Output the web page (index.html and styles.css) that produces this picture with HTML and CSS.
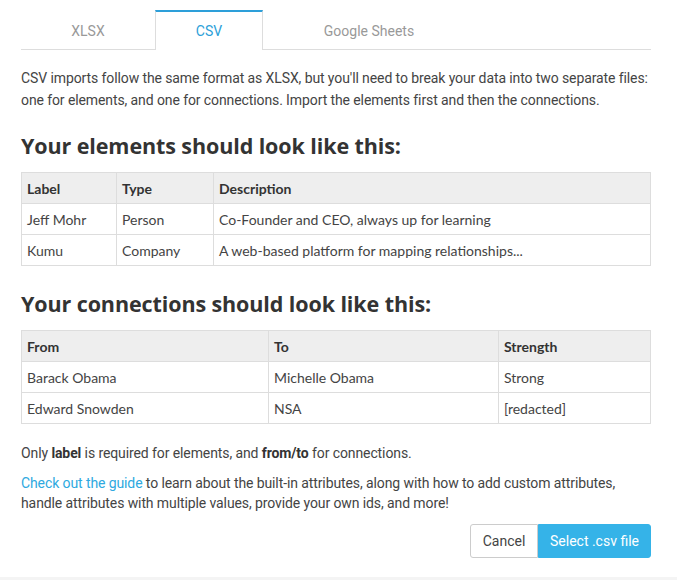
FILE: index.html
```html
<!DOCTYPE html>
<html>
<head>
<meta charset="utf-8">
<link rel="stylesheet" href="styles.css">
</head>
<body>
<div class="modal">
  <div class="tabs">
    <div class="tab tab-xlsx">XLSX</div>
    <div class="tab tab-csv active">CSV</div>
    <div class="tab tab-gs">Google Sheets</div>
  </div>
  <p class="intro">CSV imports follow the same format as XLSX, but you'll need to break your data into two separate files: one for elements, and one for connections. Import the elements first and then the connections.</p>
  <h2>Your elements should look like this:</h2>
  <table class="tbl tbl-el">
    <thead><tr><th class="c1">Label</th><th class="c2">Type</th><th>Description</th></tr></thead>
    <tbody>
      <tr><td>Jeff Mohr</td><td>Person</td><td>Co-Founder and CEO, always up for learning</td></tr>
      <tr><td>Kumu</td><td>Company</td><td>A web-based platform for mapping relationships...</td></tr>
    </tbody>
  </table>
  <h2>Your connections should look like this:</h2>
  <table class="tbl tbl-con">
    <thead><tr><th class="k1">From</th><th class="k2">To</th><th>Strength</th></tr></thead>
    <tbody>
      <tr><td>Barack Obama</td><td>Michelle Obama</td><td>Strong</td></tr>
      <tr><td>Edward Snowden</td><td>NSA</td><td>[redacted]</td></tr>
    </tbody>
  </table>
  <p class="note">Only <b>label</b> is required for elements, and <b>from/to</b> for connections.</p>
  <p class="guide"><a href="#">Check out the guide</a> to learn about the built-in attributes, along with how to add custom attributes, handle attributes with multiple values, provide your own ids, and more!</p>
  <div class="actions">
    <button class="btn btn-cancel">Cancel</button>
    <button class="btn btn-primary">Select .csv file</button>
  </div>
</div>
<div class="footer-line"></div>
</body>
</html>
```
FILE: styles.css
```css
html, body {
  margin: 0;
  padding: 0;
  background: #fff;
}
body {
  font-family: Roboto, "Liberation Sans", sans-serif;
  color: #444;
  width: 677px;
  height: 580px;
  overflow: hidden;
}
.modal {
  padding: 10px 26px 0 21px;
}
.tabs {
  display: flex;
  border-bottom: 1px solid #ddd;
  height: 39px;
}
.tab {
  box-sizing: border-box;
  display: flex;
  align-items: center;
  justify-content: center;
  font-size: 14px;
  color: #999;
  padding-top: 2px;
}
.tab-xlsx { width: 134px; }
.tab-csv { width: 108px; }
.tab-gs { width: 212px; }
.tab.active {
  color: #2d9fd9;
  background: #fff;
  border-top: 2px solid #2d9fd9;
  border-left: 1px solid #ddd;
  border-right: 1px solid #ddd;
  height: 40px;
  padding-top: 0;
}
.intro {
  margin: 17px 0 0;
  font-size: 14px;
  line-height: 22px;
  letter-spacing: -0.1px;
  color: #444;
}
h2 {
  font-family: "Open Sans", Lato, sans-serif;
  font-weight: 700;
  font-size: 21.5px;
  letter-spacing: -0.1px;
  color: #333;
  margin: 0;
  line-height: 28px;
}
.intro + h2 { margin-top: 21px; }
.tbl {
  width: 630px;
  border-collapse: collapse;
  font-family: Lato, "Open Sans", sans-serif;
  font-size: 14px;
  color: #444;
  margin-top: 12px;
}
.tbl th, .tbl td {
  border: 1px solid #ddd;
  text-align: left;
  padding: 0 5px;
  height: 30px;
}
.tbl th {
  background: #eee;
  font-weight: 700;
  color: #333;
}
.c1 { width: 84px; }
.c2 { width: 86px; }
.k1 { width: 236px; }
.k2 { width: 219px; }
.tbl-el + h2 { margin-top: 24px; }
.note {
  margin: 19px 0 0;
  font-size: 14px;
  line-height: 20px;
  letter-spacing: -0.1px;
}
.note b { color: #333; }
.guide {
  margin: 10px 0 0;
  font-size: 14px;
  line-height: 20px;
  letter-spacing: -0.1px;
}
.guide a {
  color: #2ea9e0;
  text-decoration: none;
}
.actions {
  display: flex;
  justify-content: flex-end;
  margin-top: 11px;
}
.btn {
  font-family: Roboto, "Liberation Sans", sans-serif;
  font-size: 14px;
  height: 34px;
  border: 1px solid #ccc;
  background: #fff;
  color: #444;
  padding: 0;
  margin: 0;
  white-space: nowrap;
  text-align: center;
}
.btn-cancel {
  border-radius: 3px 0 0 3px;
  width: 68px;
}
.btn-primary {
  background: #35b3e8;
  border-color: #35b3e8;
  color: #fff;
  border-radius: 0 3px 3px 0;
  width: 113px;
}
.footer-line {
  position: absolute;
  left: 0;
  right: 0;
  top: 577px;
  height: 3px;
  background: #f4f4f4;
}
```
